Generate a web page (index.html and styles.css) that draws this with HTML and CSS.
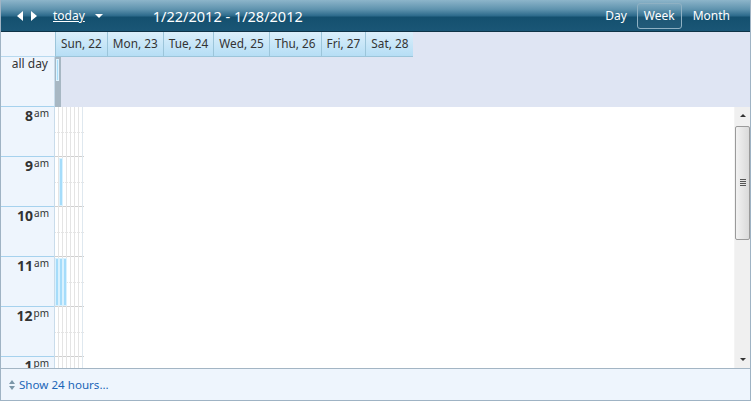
FILE: index.html
```html
<!DOCTYPE html>
<html>
<head>
<meta charset="utf-8">
<link rel="stylesheet" href="styles.css">
</head>
<body>
<div class="cal">
  <div class="toolbar">
    <div class="nav">
      <span class="arrow-l"></span>
      <span class="arrow-r"></span>
    </div>
    <a class="today">today</a>
    <span class="caret"></span>
    <span class="range">1/22/2012 - 1/28/2012</span>
    <div class="views">
      <span class="view">Day</span>
      <span class="view active">Week</span>
      <span class="view">Month</span>
    </div>
  </div>
  <div class="dayhead">
    <div class="corner"></div>
    <div class="dh">Sun, 22</div>
    <div class="dh">Mon, 23</div>
    <div class="dh">Tue, 24</div>
    <div class="dh">Wed, 25</div>
    <div class="dh">Thu, 26</div>
    <div class="dh">Fri, 27</div>
    <div class="dh">Sat, 28</div>
    <div class="dh-rest"></div>
  </div>
  <div class="allday">
    <div class="ad-label">all day</div>
    <div class="ad-strip"><span class="ad-event"></span></div>
    <div class="ad-rest"></div>
  </div>
  <div class="body">
    <div class="times">
      <div class="hour"><span class="h">8</span><span class="ap">am</span></div>
      <div class="hour"><span class="h">9</span><span class="ap">am</span></div>
      <div class="hour"><span class="h">10</span><span class="ap">am</span></div>
      <div class="hour"><span class="h">11</span><span class="ap">am</span></div>
      <div class="hour"><span class="h">12</span><span class="ap">pm</span></div>
      <div class="hour"><span class="h">1</span><span class="ap">pm</span></div>
    </div>
    <div class="days">
      <div class="slots">
        <div class="slot"></div><div class="slot"></div><div class="slot"></div>
        <div class="slot"></div><div class="slot"></div><div class="slot"></div>
      </div>
      <div class="cols">
        <div class="col"></div>
        <div class="col"><span class="ev ev9"></span></div>
        <div class="col"></div>
        <div class="col"></div>
        <div class="col"></div>
        <div class="col"></div>
        <div class="col"></div>
      </div>
      <span class="ev ev11 c1"></span>
      <span class="ev ev11 c2"></span>
      <span class="ev ev11 c3"></span>
    </div>
    <div class="blank"></div>
    <div class="scroll">
      <div class="sb-btn up"></div>
      <div class="thumb"><span class="grip"></span></div>
      <div class="track"></div>
      <div class="sb-btn down"></div>
    </div>
  </div>
  <div class="footer">
    <span class="updown"><span class="u"></span><span class="d"></span></span>
    <a class="show">Show 24 hours...</a>
  </div>
</div>
</body>
</html>
```

FILE: styles.css
```css
* { box-sizing: border-box; }
html, body { margin: 0; padding: 0; background: #fff; }
body { font-family: "Noto Sans", "Open Sans", sans-serif; font-size: 12px; color: #333; }

.cal {
  width: 751px;
  height: 401px;
  border: 1px solid #9fb3c4;
  border-top: none;
  display: flex;
  flex-direction: column;
  overflow: hidden;
}

.toolbar {
  height: 32px;
  flex: none;
  display: flex;
  align-items: center;
  color: #fff;
  background: linear-gradient(#8db5ca 0%, #5f93ae 30%, #2f6c8d 50%, #14506f 56%, #1a5676 100%);
  border-bottom: 1px solid #0e3347;
  margin: 0 -1px;
  padding: 0 0 0 17px;
}
.nav { display: flex; gap: 8px; align-items: center; }
.arrow-l, .arrow-r { width: 0; height: 0; border-top: 5px solid transparent; border-bottom: 5px solid transparent; }
.arrow-l { border-right: 6px solid #fff; }
.arrow-r { border-left: 6px solid #fff; }
.today { margin-left: 16px; text-decoration: underline; font-size: 12px; color: #fff; }
.caret { margin-left: 10px; width: 0; height: 0; border-left: 4px solid transparent; border-right: 4px solid transparent; border-top: 4px solid #fff; }
.range { margin-left: 50px; font-size: 14.5px; }
.views { margin-left: auto; display: flex; align-items: center; gap: 9px; padding-right: 20px; }
.view { padding: 3px 0 4px; font-size: 12px; border: 1px solid transparent; border-radius: 3px; }
.view.active { border-color: #8fb1c3; background: rgba(255,255,255,0.04); padding: 3px 6px 4px; margin-right: 1px; }

.dayhead { height: 25px; flex: none; display: flex; background: #dfe5f3; }
.corner { width: 54px; background: #eef5fd; border-bottom: 1px solid #b7d9ef; }
.dh {
  padding: 3px 5px 0;
  font-size: 11.8px;
  background: linear-gradient(#dbeffb, #b6def5);
  border-left: 1px solid #9cc5da;
  border-bottom: 1px solid #9cc5da;
  color: #333;
  white-space: nowrap;
}
.dh:last-of-type { border-right: 1px solid #9cc5da; }
.dh-rest { flex: 1; }

.allday { height: 50px; flex: none; display: flex; }
.ad-label { width: 54px; background: #eef5fd; border-right: 1px solid #c9dceb; border-bottom: 1px solid #a6d2ee; text-align: right; padding: 0 6px 0 0; line-height: 14px; }
.ad-strip { width: 6px; background: #a7b7c3; position: relative; }
.ad-event { position: absolute; left: 1px; top: 2px; width: 3px; height: 22px; background: #a9defa; border: 1px solid #dff3fe; }
.ad-rest { flex: 1; background: #dfe5f3; }

.body { flex: 1; display: flex; min-height: 0; overflow: hidden; }
.times { width: 54px; flex: none; background: #eef5fd; border-right: 1px solid #c9dceb; }
.hour { height: 50px; border-bottom: 1px solid #a6d2ee; padding: 1px 5px 0 0; display: flex; justify-content: flex-end; align-items: flex-start; }
.hour .h { font-size: 14px; font-weight: bold; color: #333; line-height: 16px; }
.hour .ap { font-size: 10px; color: #333; line-height: 11px; margin-left: 1px; }

.days { width: 29px; flex: none; position: relative; }
.slots { position: absolute; inset: 0; }
.slot { height: 50px; border-bottom: 1px solid #cfcfcf; position: relative; }
.slot::after { content: ""; position: absolute; left: 0; right: 0; top: 25px; border-top: 1px dotted #e4e4e4; }
.cols { position: absolute; inset: 0; display: flex; }
.col { width: 4px; border-right: 1px solid #e4e4e4; position: relative; }
.col:last-child { border-right: 1px solid #dfe8ef; }
.ev { position: absolute; background: #a5dcfa; border: 1px solid #d9f1fe; }
.ev9 { left: 0; width: 4px; top: 51px; height: 48px; }
.ev11 { top: 151px; height: 48px; width: 4px; }
.c1 { left: 0; }
.c2 { left: 4px; }
.c3 { left: 8px; }

.blank { flex: 1; background: #fff; }

.scroll { width: 16px; flex: none; background: #f0f0f0; display: flex; flex-direction: column; border-left: 1px solid #f4f4f4; }
.sb-btn { height: 17px; flex: none; position: relative; }
.sb-btn::after { content: ""; position: absolute; left: 5px; width: 0; height: 0; border-left: 3px solid transparent; border-right: 3px solid transparent; }
.up::after { top: 7px; border-bottom: 3px solid #333; }
.down::after { top: 7px; border-top: 3px solid #333; }
.thumb { height: 114px; flex: none; margin: 2px 0 0; border: 1px solid #9a9a9a; border-radius: 2px; background: linear-gradient(90deg, #f2f2f2, #e6e6e6 50%, #dadada); position: relative; }
.grip { position: absolute; left: 4px; top: 52px; width: 6px; height: 7px; background: repeating-linear-gradient(#555 0 1px, transparent 1px 2px); }
.track { flex: 1; }

.footer { height: 32px; flex: none; background: #eef5fd; border-top: 1px solid #a3b5c4; display: flex; align-items: center; padding-left: 8px; }
.updown { display: flex; flex-direction: column; gap: 2px; margin-right: 4px; }
.updown .u, .updown .d { width: 0; height: 0; border-left: 3px solid transparent; border-right: 3px solid transparent; }
.updown .u { border-bottom: 4px solid #7b96a8; }
.updown .d { border-top: 4px solid #7b96a8; }
.show { color: #1b66b8; font-size: 11.6px; }
```
